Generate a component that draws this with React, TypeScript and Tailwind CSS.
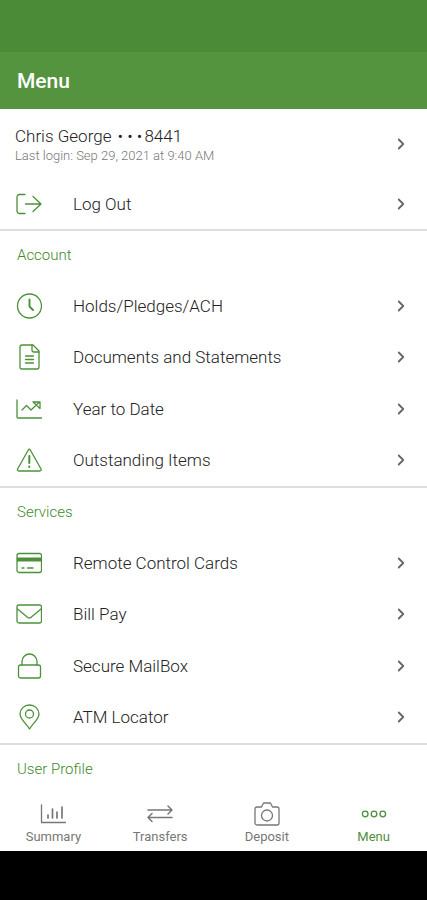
import React from "react";
import { ChevronRight } from "lucide-react";

type IconProps = {
    children: React.ReactNode;
    className?: string;
};

type MenuItem = {
    label: string;
    icon: React.ReactNode;
};

const Icon: React.FC<IconProps> = ({ children, className = "" }) => (
    <svg
        viewBox="0 0 26 26"
        fill="none"
        stroke="currentColor"
        strokeWidth="1.3"
        strokeLinecap="round"
        strokeLinejoin="round"
        aria-hidden="true"
        className={`size-[26px] shrink-0 ${className}`}
    >
        {children}
    </svg>
);

const LogOutIcon = () => (
    <Icon>
        <path d="M9 3.500H3.500A2.500 2.500 0 0 0 1 6V20A2.500 2.500 0 0 0 3.500 22.500H9" />
        <path d="M9.500 13H25M17 5.500L25 13L17 20.500" />
    </Icon>
);

const accountItems: MenuItem[] = [
    {
        label: "Holds/Pledges/ACH",
        icon: (
            <Icon>
                <circle cx="13.500" cy="13" r="12" />
                <path d="M13.500 6.500V13.500L17 17" strokeWidth="1.9" />
            </Icon>
        ),
    },
    {
        label: "Documents and Statements",
        icon: (
            <Icon>
                <path d="M17 1H6A2 2 0 0 0 4 3V23A2 2 0 0 0 6 25H21A2 2 0 0 0 23 23V7Z" />
                <path d="M16 1V6A2 2 0 0 0 18 8H23" />
                <path d="M9.500 12H17.500M9.500 15.500H17.500M9.500 19H17.500" />
            </Icon>
        ),
    },
    {
        label: "Year to Date",
        icon: (
            <Icon>
                <path d="M1 4V21A1 1 0 0 0 2 22H25.500" />
                <path d="M6 14L10.500 9.500L15 14L23 6.500M17 6H24V12.500L17 6" />
            </Icon>
        ),
    },
    {
        label: "Outstanding Items",
        icon: (
            <Icon>
                <path d="M12.300 3Q13.300 1.500 14.300 3L25 22Q25.600 24 23.800 24H2.800Q1 24 1.600 22Z" />
                <path d="M13.300 9V16M13.300 19.500V20" strokeWidth="2" />
            </Icon>
        ),
    },
];

const serviceItems: MenuItem[] = [
    {
        label: "Remote Control Cards",
        icon: (
            <Icon>
                <rect x="1" y="3.500" width="24.500" height="19" rx="2" />
                <path d="M1 9.500H25.500" strokeWidth="4" strokeLinecap="butt" />
                <path d="M6 18H8M11.500 18H17" />
            </Icon>
        ),
    },
    {
        label: "Bill Pay",
        icon: (
            <Icon>
                <rect x="1" y="4" width="24.500" height="18" rx="2" />
                <path d="M1.500 8L11.800 16.500Q13.300 17.700 14.800 16.500L25 8" />
            </Icon>
        ),
    },
    {
        label: "Secure MailBox",
        icon: (
            <Icon>
                <rect x="2.500" y="12" width="22" height="13" rx="2" />
                <path d="M6 12V8.500A7.500 7.500 0 0 1 21 8.500V12" />
            </Icon>
        ),
    },
    {
        label: "ATM Locator",
        icon: (
            <Icon>
                <path d="M13.500 25C11 20 4 15.500 4 10A9.500 9 0 0 1 23 10C23 15.500 16 20 13.500 25Z" />
                <circle cx="13.500" cy="10" r="4" />
            </Icon>
        ),
    },
];

const tabs: MenuItem[] = [
    {
        label: "Summary",
        icon: (
            <Icon>
                <path d="M1.500 4V21.500H25.500" />
                <path d="M8 14V17M12.500 8V17M17 11V17M22 6V17" strokeWidth="1.700" />
            </Icon>
        ),
    },
    {
        label: "Transfers",
        icon: (
            <Icon>
                <path d="M1 9H25M21 5L25 9L21 13" strokeWidth="1.500" />
                <path d="M25 16.500H1M5 12.500L1 16.500L5 20.500" strokeWidth="1.500" />
            </Icon>
        ),
    },
    {
        label: "Deposit",
        icon: (
            <Icon>
                <path d="M3 6H7.500L9 3A1.500 1.500 0 0 1 10.500 2H15.500A1.500 1.500 0 0 1 17 3L18.500 6H23A2 2 0 0 1 25 8V22A2 2 0 0 1 23 24H3A2 2 0 0 1 1 22V8A2 2 0 0 1 3 6Z" />
                <circle cx="13" cy="14.500" r="5.500" />
            </Icon>
        ),
    },
    {
        label: "Menu",
        icon: (
            <Icon>
                <circle cx="4.200" cy="13" r="2.800" />
                <circle cx="13" cy="13" r="2.800" />
                <circle cx="21.800" cy="13" r="2.800" />
            </Icon>
        ),
    },
];

const Chevron = () => (
    <ChevronRight className="size-[18px] shrink-0 text-[#666]" strokeWidth={2.4} aria-hidden="true" />
);

const SectionTitle: React.FC<{ children: React.ReactNode }> = ({ children }) => (
    <h2 className="flex h-[49px] items-center px-[17px] text-[15px] font-light text-[#3d8a29]">
        {children}
    </h2>
);

const MenuRow: React.FC<MenuItem> = ({ label, icon }) => (
    <button className="flex w-full items-center pl-4 pr-[17px] text-left">
        <span className="text-[#4c9139]">{icon}</span>
        <span className="ml-[31px] flex-1 text-[17px] font-light leading-6">{label}</span>
        <Chevron />
    </button>
);

const MenuSection: React.FC<{ title: string; items: MenuItem[] }> = ({ title, items }) => (
    <section className="flex min-h-[257px] flex-col border-b-2 border-[#dedede]">
        <SectionTitle>{title}</SectionTitle>
        <ul className="flex flex-1 flex-col">
            {items.map((item) => (
                <li key={item.label} className="flex flex-1">
                    <MenuRow {...item} />
                </li>
            ))}
        </ul>
    </section>
);

const App: React.FC = () => {
    return (
        <div className="flex min-h-screen flex-col bg-white font-['Roboto',sans-serif] text-[#222]">
            <div className="h-[52px] bg-[#4b8a37]" />
            <header className="flex h-[57px] items-center bg-[#55943f] px-[17px] pt-[2px]">
                <h1 className="text-[21px] font-medium text-white">Menu</h1>
            </header>
            <main className="flex-1">
                <section className="border-b-2 border-[#dedede]">
                    <button className="flex h-[69px] w-full items-center pl-[15px] pr-[17px] text-left">
                        <span className="flex-1 pt-1">
                            <span className="block text-[17px] font-light leading-5">
                                Chris George <span className="mx-[2px]">• • •</span>8441
                            </span>
                            <span className="block text-[13px] font-light leading-5 text-[#777]">
                                Last login: Sep 29, 2021 at 9:40 AM
                            </span>
                        </span>
                        <Chevron />
                    </button>
                    <div className="flex h-[51px]">
                        <MenuRow label="Log Out" icon={<LogOutIcon />} />
                    </div>
                </section>
                <MenuSection title="Account" items={accountItems} />
                <MenuSection title="Services" items={serviceItems} />
                <SectionTitle>User Profile</SectionTitle>
            </main>
            <nav className="grid grid-cols-4 pb-1">
                {tabs.map((tab) => (
                    <button
                        key={tab.label}
                        aria-current={tab.label === "Menu" ? "page" : undefined}
                        className="flex flex-col items-center text-[#777] aria-[current=page]:text-[#4c9139]"
                    >
                        {tab.icon}
                        <span className="text-[13px] leading-5">{tab.label}</span>
                    </button>
                ))}
            </nav>
            <div className="h-[49px] bg-black" />
        </div>
    );
};

export default App;
